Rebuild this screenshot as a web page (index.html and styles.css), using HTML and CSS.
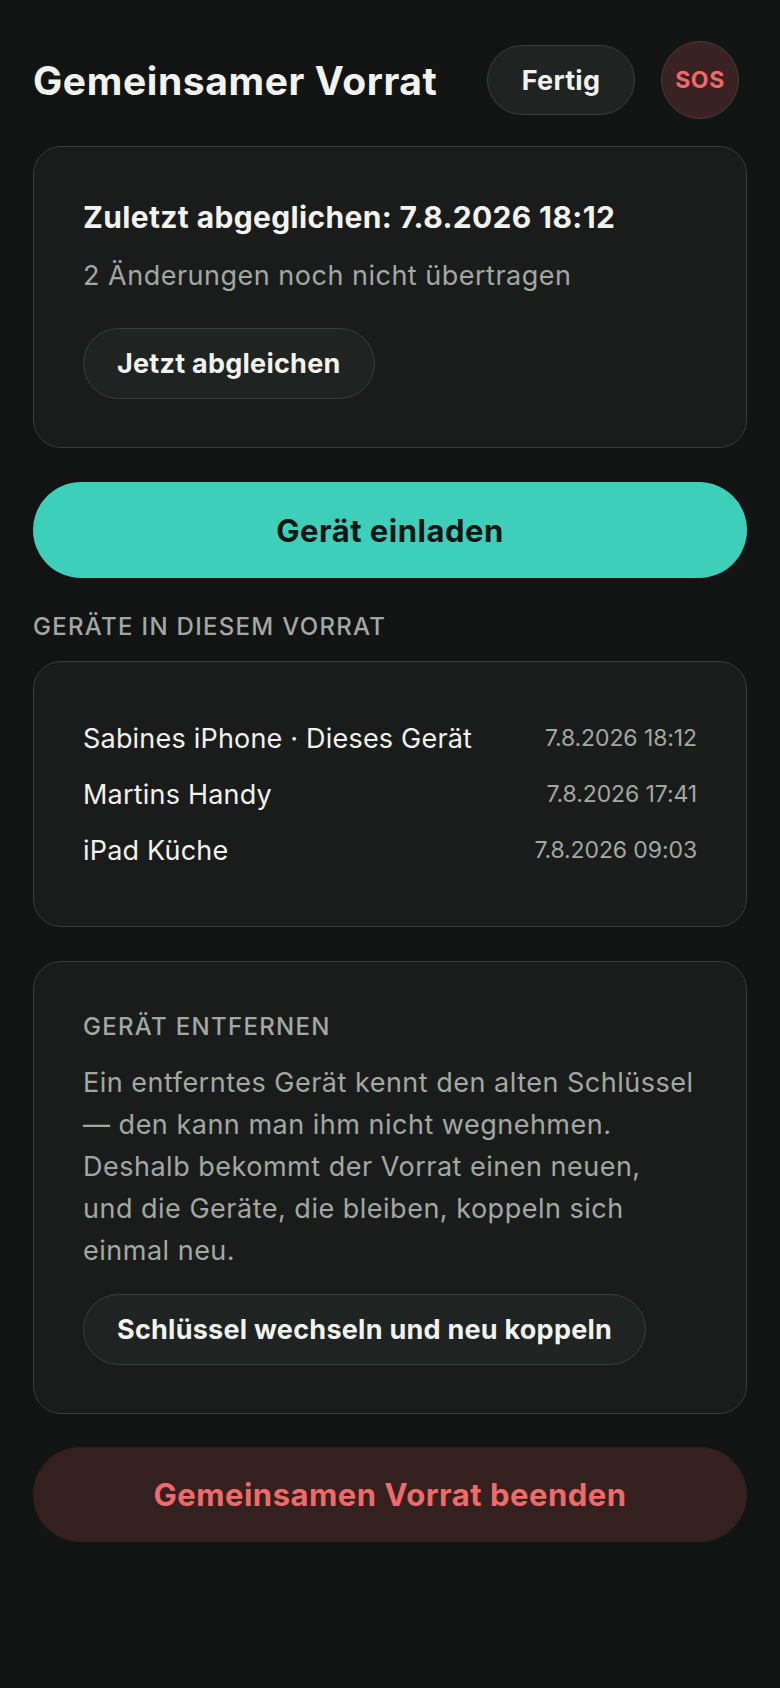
FILE: index.html
```html
<!DOCTYPE html>
<html lang="de">
<head>
    <meta charset="UTF-8">
    <meta name="viewport" content="width=device-width, initial-scale=1.0">
    <title>Gemeinsamer Vorrat</title>
    <link rel="stylesheet" href="styles.css">
</head>
<body>
    <div class="page">
        <header class="top">
            <h1>Gemeinsamer Vorrat</h1>
            <div class="top-actions">
                <button class="pill">Fertig</button>
                <button class="sos">SOS</button>
            </div>
        </header>

        <section class="card sync">
            <h2>Zuletzt abgeglichen: 7.8.2026 18:12</h2>
            <p class="muted">2 Änderungen noch nicht übertragen</p>
            <button class="pill">Jetzt abgleichen</button>
        </section>

        <button class="primary">Gerät einladen</button>

        <div class="section-label">Geräte in diesem Vorrat</div>
        <section class="card devices">
            <div class="device">
                <span class="name">Sabines iPhone · Dieses Gerät</span>
                <span class="date">7.8.2026 18:12</span>
            </div>
            <div class="device">
                <span class="name">Martins Handy</span>
                <span class="date">7.8.2026 17:41</span>
            </div>
            <div class="device">
                <span class="name">iPad Küche</span>
                <span class="date">7.8.2026 09:03</span>
            </div>
        </section>

        <section class="card remove">
            <div class="section-label">Gerät entfernen</div>
            <p class="muted">Ein entferntes Gerät kennt den alten Schlüssel<br>
                — den kann man ihm nicht wegnehmen.<br>
                Deshalb bekommt der Vorrat einen neuen,<br>
                und die Geräte, die bleiben, koppeln sich<br>
                einmal neu.</p>
            <button class="pill">Schlüssel wechseln und neu koppeln</button>
        </section>

        <button class="danger">Gemeinsamen Vorrat beenden</button>
    </div>
</body>
</html>
```

FILE: styles.css
```css
body {
    margin: 0;
    background: #121413;
    color: #f2f2ee;
    font-family: 'Inter', 'Noto Sans', sans-serif;
}
.page {
    padding: 41px 33px 60px;
    display: flex;
    flex-direction: column;
}
button {
    font-family: inherit;
    cursor: pointer;
}
.top {
    display: flex;
    align-items: center;
    justify-content: space-between;
    padding-right: 8px;
    margin-bottom: 27px;
}
h1 {
    margin: 0;
    font-size: 39px;
    font-weight: 700;
    letter-spacing: 0.6px;
}
.top-actions {
    display: flex;
    align-items: center;
    gap: 26px;
}
.pill {
    height: 71px;
    padding: 0 33px;
    border: 1.5px solid #3b3f3d;
    border-radius: 40px;
    background: #1f2321;
    color: #f2f2ee;
    font-size: 27px;
    font-weight: 700;
    letter-spacing: 0.25px;
}
.top .pill {
    width: 148px;
    height: 70px;
    padding: 0;
}
.sos {
    width: 78px;
    height: 78px;
    border-radius: 50%;
    border: 1.5px solid #4a3a3a;
    background: #3a2222;
    color: #f06868;
    font-size: 23px;
    font-weight: 700;
    letter-spacing: 0.6px;
    padding: 0;
}
.card {
    background: #1a1c1b;
    border: 1px solid #3a3d3b;
    border-radius: 28px;
    display: flex;
    flex-direction: column;
}
.sync {
    padding: 51px 49px 48px;
    align-items: flex-start;
}
.sync h2 {
    margin: 0;
    font-size: 30px;
    line-height: 38px;
    font-weight: 700;
    letter-spacing: 0.35px;
}
.muted {
    color: #a3a8a3;
    font-size: 27px;
    letter-spacing: 0.5px;
    margin: 0;
}
.sync .muted {
    line-height: 36px;
    margin: 22px 0 34px;
}
.primary {
    margin-top: 34px;
    height: 96px;
    border: none;
    border-radius: 48px;
    background: #3ecfba;
    color: #0d1614;
    font-size: 31px;
    font-weight: 700;
    letter-spacing: 0.5px;
}
.section-label {
    margin: 34px 0 19px;
    color: #a3a8a3;
    font-size: 24px;
    line-height: 30px;
    font-weight: 500;
    letter-spacing: 1.3px;
    text-transform: uppercase;
}
.devices {
    padding: 48px 49px;
}
.device {
    display: flex;
    justify-content: space-between;
    align-items: center;
    height: 56px;
}
.device .name {
    font-size: 27px;
    letter-spacing: 0.2px;
}
.device .date {
    font-size: 23px;
    color: #a3a8a3;
    letter-spacing: -0.1px;
}
.remove {
    margin-top: 34px;
    padding: 50px 49px 48px;
}
.remove .section-label {
    margin: 0;
}
.remove .muted {
    margin: 20px 0 22px;
    line-height: 42px;
    letter-spacing: 0.5px;
}
.remove .pill {
    align-self: flex-start;
}
.danger {
    margin-top: 33px;
    height: 95px;
    border: none;
    border-radius: 48px;
    background: #33201f;
    color: #ef6a6a;
    font-size: 31px;
    font-weight: 700;
    letter-spacing: 0.5px;
}
```
